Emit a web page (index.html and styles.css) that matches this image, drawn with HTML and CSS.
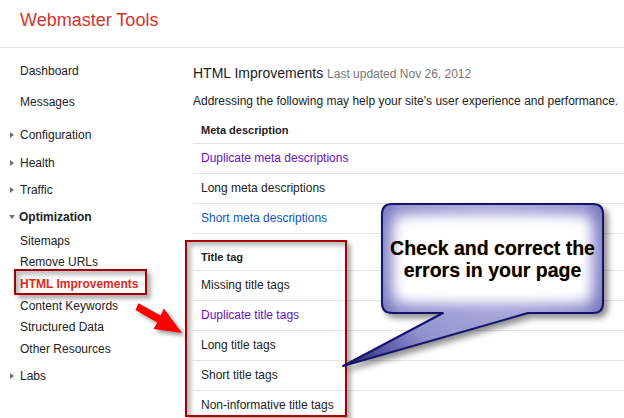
FILE: index.html
```html
<!DOCTYPE html>
<html lang="en">
<head>
  <meta charset="UTF-8" />
  <title>Webmaster Tools - HTML Improvements</title>
  <link rel="stylesheet" href="styles.css">
</head>
<body>
  <header class="topbar">
    <span class="brand">Webmaster Tools</span>
  </header>

  <div class="layout">
    <nav class="sidebar">
      <a class="nav-item top" href="#">Dashboard</a>
      <a class="nav-item top" href="#">Messages</a>
      <a class="nav-item group collapsed first" href="#">Configuration</a>
      <a class="nav-item group collapsed" href="#">Health</a>
      <a class="nav-item group collapsed" href="#">Traffic</a>
      <div class="nav-item open">Optimization</div>
      <div class="subnav">
        <a href="#">Sitemaps</a>
        <a href="#">Remove URLs</a>
        <a class="current" href="#">HTML Improvements</a>
        <a href="#">Content Keywords</a>
        <a href="#">Structured Data</a>
        <a href="#">Other Resources</a>
      </div>
      <a class="nav-item group collapsed labs" href="#">Labs</a>
    </nav>

    <main class="content">
      <h1 class="page-title">HTML Improvements <span class="updated">Last updated Nov 26, 2012</span></h1>
      <p class="intro">Addressing the following may help your site's user experience and performance.</p>

      <section class="issues">
        <div class="issues-head">Meta description</div>
        <a class="issue visited" href="#">Duplicate meta descriptions</a>
        <div class="issue">Long meta descriptions</div>
        <a class="issue link" href="#">Short meta descriptions</a>
      </section>

      <section class="issues second">
        <div class="issues-head">Title tag</div>
        <div class="issue">Missing title tags</div>
        <a class="issue visited" href="#">Duplicate title tags</a>
        <div class="issue">Long title tags</div>
        <div class="issue">Short title tags</div>
        <div class="issue">Non-informative title tags</div>
      </section>
    </main>
  </div>

  <!-- annotations drawn on top of the page -->
  <div class="mark mark-nav"></div>
  <div class="mark mark-title"></div>

  <svg class="pointer" width="60" height="44" viewBox="0 0 60 44">
    <polygon points="8.5,5.2 30.5,17.6 33.8,10.6 52,35 23.5,31 27.4,24.5 5.5,12.1" fill="#ff0000"/>
  </svg>

  <div class="callout">
    <svg class="callout-shape" width="270" height="175" viewBox="0 0 270 175">
      <defs>
        <radialGradient id="bubbleFill" cx="152" cy="58" r="190" gradientUnits="userSpaceOnUse">
          <stop offset="0" stop-color="#b8b8e4"/>
          <stop offset="0.55" stop-color="#9292d0"/>
          <stop offset="0.72" stop-color="#6060ac"/>
          <stop offset="1" stop-color="#16166e"/>
        </radialGradient>
        <filter id="soft" x="-20%" y="-20%" width="140%" height="140%">
          <feGaussianBlur stdDeviation="7"/>
        </filter>
        <clipPath id="bubbleClip">
          <path d="M52 4 H253 Q263 4 263 14 V103 Q263 113 253 113 H188 L3 166 L103 113 H52 Q42 113 42 103 V14 Q42 4 52 4 Z"/>
        </clipPath>
      </defs>
      <path d="M52 4 H253 Q263 4 263 14 V103 Q263 113 253 113 H188 L3 166 L103 113 H52 Q42 113 42 103 V14 Q42 4 52 4 Z" fill="url(#bubbleFill)"/>
      <g clip-path="url(#bubbleClip)">
        <rect x="54" y="16" width="197" height="86" rx="8" fill="#ffffff" filter="url(#soft)"/>
        <rect x="64" y="24" width="177" height="70" fill="#ffffff" filter="url(#soft)"/>
      </g>
      <path d="M52 4 H253 Q263 4 263 14 V103 Q263 113 253 113 H188 L3 166 L103 113 H52 Q42 113 42 103 V14 Q42 4 52 4 Z" fill="none" stroke="#14146c" stroke-width="2" stroke-linejoin="round"/>
    </svg>
    <div class="callout-text">Check and correct the<br>errors in your page</div>
  </div>
</body>
</html>
```

FILE: styles.css
```css
body {
  margin: 0;
  height: 418px;
  overflow: hidden;
  position: relative;
  background: #fff;
  color: #222;
  font-family: "Liberation Sans", Arial, sans-serif;
  font-size: 12px;
}

a {
  text-decoration: none;
  color: inherit;
}

.topbar {
  height: 47px;
  border-bottom: 1px solid #e5e5e5;
  box-sizing: content-box;
}

.brand {
  display: block;
  padding: 9px 0 0 20px;
  line-height: 22px;
  font-size: 18px;
  color: #d9312b;
}

.layout {
  display: flex;
}

/* left navigation */
.sidebar {
  width: 173px;
  flex: none;
  padding: 8px 0 0 20px;
}

.nav-item {
  display: block;
  color: #222;
}

.nav-item.top {
  line-height: 31px;
}

.nav-item.group {
  line-height: 27.5px;
}

.nav-item.first {
  margin-top: 4px;
}

.nav-item.collapsed::before {
  content: "";
  display: inline-block;
  vertical-align: 1px;
  margin: 0 6px 0 -10px;
  border-left: 4px solid #707070;
  border-top: 3.5px solid transparent;
  border-bottom: 3.5px solid transparent;
}

.nav-item.open {
  margin-top: 1px;
  line-height: 22px;
  font-weight: bold;
}

.nav-item.open::before {
  content: "";
  display: inline-block;
  vertical-align: 2px;
  margin: 0 4px 0 -11px;
  border-top: 4px solid #707070;
  border-left: 3.5px solid transparent;
  border-right: 3.5px solid transparent;
}

.subnav {
  margin-top: 3px;
}

.subnav a {
  display: block;
  line-height: 21.7px;
  color: #222;
}

.subnav a.current {
  color: #dd2a22;
  font-weight: bold;
}

.nav-item.labs {
  margin-top: 2.5px;
}

/* main column */
.content {
  flex: 1;
  padding-top: 15px;
}

.page-title {
  margin: 0;
  line-height: 20px;
  font-size: 14px;
  font-weight: normal;
  color: #222;
}

.updated {
  font-size: 12px;
  color: #777;
}

.intro {
  margin: 8px 0 0;
  line-height: 18px;
}

.issues {
  margin-top: 7px;
}

.issues.second {
  margin-top: 10px;
}

.issues-head {
  padding-left: 8px;
  line-height: 26px;
  font-size: 11px;
  font-weight: bold;
  border-bottom: 1px solid #e5e5e5;
}

.issue {
  display: block;
  padding-left: 8px;
  line-height: 29px;
  border-bottom: 1px solid #e5e5e5;
  color: #222;
}

.issue.visited {
  color: #6611cc;
}

.issue.link {
  color: #1155cc;
}

/* red frames */
.mark {
  position: absolute;
  box-sizing: border-box;
  border: 2px solid #a80000;
  box-shadow: 4px 4px 4px rgba(0, 0, 0, 0.3), inset 4px 4px 4px rgba(0, 0, 0, 0.25);
}

.mark-nav {
  left: 14px;
  top: 269px;
  width: 133px;
  height: 26px;
}

.mark-title {
  left: 185px;
  top: 240px;
  width: 162px;
  height: 177px;
}

.pointer {
  position: absolute;
  left: 130px;
  top: 298px;
  filter: drop-shadow(3px 3px 2px rgba(0, 0, 0, 0.4));
}

/* speech bubble */
.callout {
  position: absolute;
  left: 340px;
  top: 200px;
  width: 270px;
  height: 175px;
}

.callout-shape {
  display: block;
  filter: drop-shadow(4px 4px 3px rgba(0, 0, 0, 0.45));
}

.callout-text {
  position: absolute;
  left: 42px;
  top: 4px;
  width: 221px;
  height: 109px;
  display: flex;
  align-items: center;
  justify-content: center;
  text-align: center;
  font-size: 19.5px;
  line-height: 22px;
  font-weight: bold;
  color: #000;
  text-shadow: 0 0 1px rgba(214, 150, 50, 0.9);
}
```
